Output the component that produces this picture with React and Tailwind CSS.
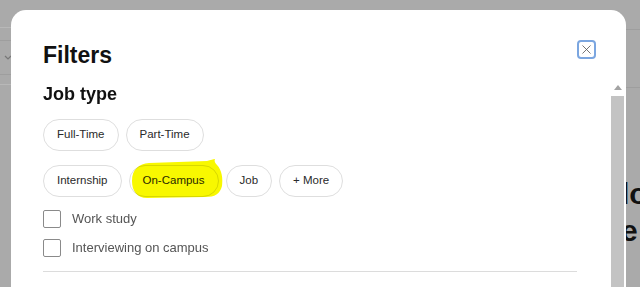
import { X } from "lucide-react";

const row1 = ["Full-Time", "Part-Time"];
const row2 = ["Internship", "On-Campus", "Job", "+ More"];
const checks = ["Work study", "Interviewing on campus"];

// marker scribble someone drew over the selected chip
function Highlight() {
  return (
    <svg
      className="pointer-events-none absolute left-[-5px] top-[-15px] mix-blend-multiply"
      width="105"
      height="55"
      viewBox="0 0 105 55"
    >
      <path
        d="M7 30 C7 18 14 13 24 12 L82 10 C86 9 88 8 90 8 C89 10 90 12 92 14 C97 19 98 28 97 35 C95 43 90 46 80 46 L22 47 C12 47 7 40 7 30 Z"
        fill="#f8f800"
      />
    </svg>
  );
}

function Chip({ label }) {
  return (
    <button className="relative h-[32px] rounded-full border border-[#dedede] bg-white px-[13px] text-[11.5px] text-[#2a2a2a]">
      {label}
      {label === "On-Campus" && <Highlight />}
    </button>
  );
}

export default function App() {
  return (
    <div
      className="flex h-[287px] w-[640px] overflow-hidden bg-[#aaaaaa]"
      style={{ fontFamily: '"Liberation Sans", Arial, sans-serif' }}
    >
      {/* page behind, left edge */}
      <div className="flex w-[11px] shrink-0 flex-col">
        <div className="mt-[27px] h-px bg-[#b8b8b8]" />
        <div className="mt-[12px] h-px bg-[#9e9e9e]" />
        <svg className="ml-[4px] mt-[14px]" width="8" height="6" viewBox="0 0 8 6">
          <path d="M1 1 L4 4 L7 1" fill="none" stroke="#777" strokeWidth="1.2" />
        </svg>
        <div className="mt-[13px] h-px bg-[#9e9e9e]" />
        <div className="mt-[9px] h-px bg-[#b8b8b8]" />
      </div>

      {/* modal */}
      <div className="relative z-10 mt-[10px] flex h-[300px] w-[615px] shrink-0 rounded-[15px] bg-white">
        <div className="flex-1 pl-[32px] pt-[31px]">
          <div className="flex items-start justify-between pr-[13px]">
            <h2 className="text-[23px] font-bold leading-[28px] text-[#111]">Filters</h2>
            <button className="-mt-[1px] flex h-[19px] w-[19px] items-center justify-center rounded-[4px] border-2 border-[#7ba6e0]">
              <X size={15} strokeWidth={1.3} color="#555" />
            </button>
          </div>
          <h3 className="mt-[14px] text-[18px] font-bold leading-[22px] text-[#111]">Job type</h3>

          <div className="mt-[14px] flex gap-[7px]">
            {row1.map((c) => (
              <Chip key={c} label={c} />
            ))}
          </div>
          <div className="mt-[14px] flex gap-[7px]">
            {row2.map((c) => (
              <Chip key={c} label={c} />
            ))}
          </div>

          <div className="mt-[13px] flex flex-col gap-[11px]">
            {checks.map((c) => (
              <label key={c} className="flex items-center gap-[11px]">
                <span className="h-[18px] w-[18px] rounded-[2px] border border-[#8a8a8a]" />
                <span className="text-[13px] leading-[18px] text-[#555]">{c}</span>
              </label>
            ))}
          </div>

          <div className="mt-[14px] h-px w-[534px] bg-[#dcdcdc]" />
        </div>

        {/* scrollbar */}
        <div className="flex w-[17px] flex-col pt-[69px]">
          <div className="flex h-[17px] items-center justify-center">
            <svg width="8" height="5" viewBox="0 0 8 5">
              <path d="M0 5 L4 0 L8 5 Z" fill="#a3a3a3" />
            </svg>
          </div>
          <div className="mx-[2px] flex-1 bg-[#c3c3c3]" />
        </div>
      </div>

      {/* page behind, right edge */}
      <div className="flex min-w-0 flex-1 flex-col">
        <div className="mt-[29px] h-px bg-[#9e9e9e]" />
        <div className="mt-[57px] h-px bg-[#9e9e9e]" />
        <div className="-ml-[5px] mt-[87px] whitespace-nowrap text-[30px] font-bold leading-[37px] text-[#111]">
          <div>lo</div>
          <div>e</div>
        </div>
      </div>
    </div>
  );
}
